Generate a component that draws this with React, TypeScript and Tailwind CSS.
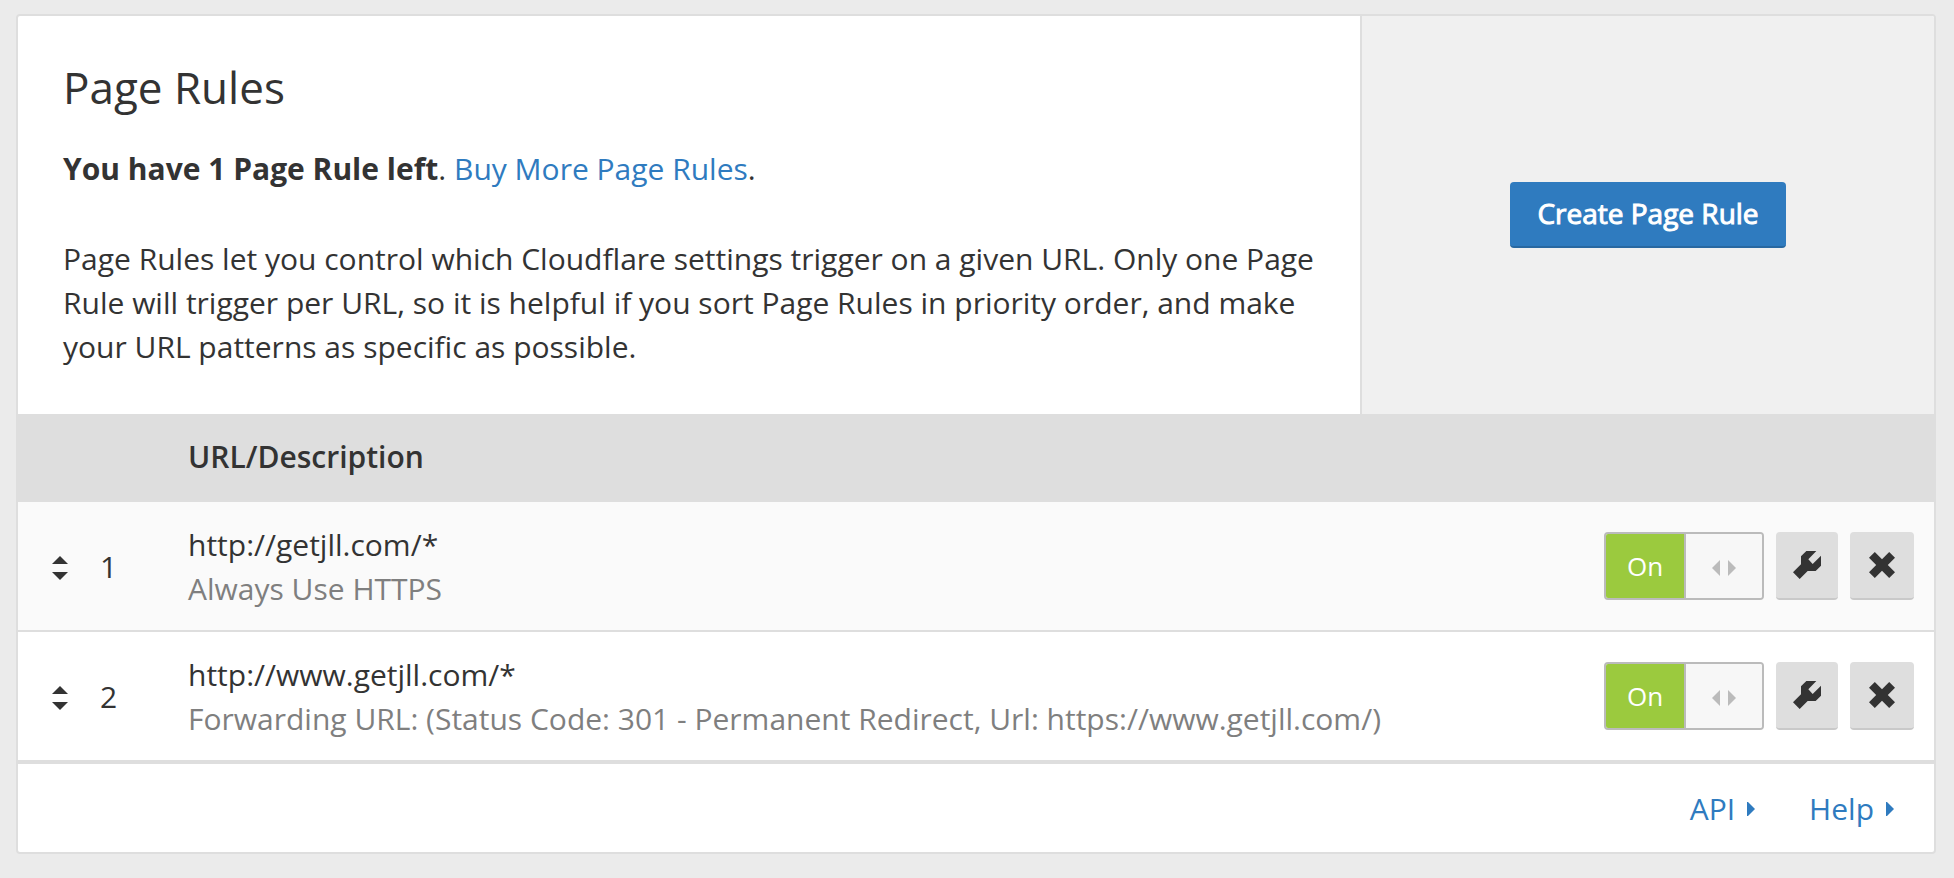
import { useState } from "react";

type Rule = { id: number; url: string; description: string };

const rules: Rule[] = [
  { id: 1, url: "http://getjll.com/*", description: "Always Use HTTPS" },
  {
    id: 2,
    url: "http://www.getjll.com/*",
    description:
      "Forwarding URL: (Status Code: 301 - Permanent Redirect, Url: https://www.getjll.com/)",
  },
];

function SortIcon() {
  return (
    <svg width="16" height="24" viewBox="0 0 16 24" fill="currentColor" aria-hidden="true">
      <path d="M8 0 16 8H0ZM0 16h16l-8 8Z" />
    </svg>
  );
}

function WrenchIcon() {
  return (
    <svg width="28" height="28" viewBox="0 0 84 84" fill="currentColor" aria-hidden="true">
      <path d="M20 84 0 64 24 40V16L40 0H70L46 25 59 39 84 14V44L68 60H44Z" />
    </svg>
  );
}

function CrossIcon() {
  return (
    <svg width="26" height="26" viewBox="0 0 76 76" fill="currentColor" aria-hidden="true">
      <path d="M17 0 38 21 59 0 76 17 55 38 76 59 59 76 38 55 17 76 0 59 21 38 0 17Z" />
    </svg>
  );
}

function Caret() {
  return (
    <svg width="8" height="14" viewBox="0 0 8 14" fill="currentColor" aria-hidden="true">
      <path d="M0 0h1l7 7-7 7H0Z" />
    </svg>
  );
}

function Toggle({ label }: { label: string }) {
  const [on, setOn] = useState(true);
  const handle = (
    <span className="flex flex-1 items-center justify-center bg-[#f7f7f7] pt-1 text-[#bbbbbb]">
      <svg width="24" height="16" viewBox="0 0 24 16" fill="currentColor" aria-hidden="true">
        <path d="M8 0v16L0 8ZM16 0l8 8-8 8Z" />
      </svg>
    </span>
  );
  return (
    <button
      type="button"
      role="switch"
      aria-checked={on}
      aria-label={label}
      onClick={() => setOn(!on)}
      className="flex h-[68px] w-40 cursor-pointer overflow-hidden rounded border-2 border-[#bbbbbb] text-[26px]"
    >
      {on ? (
        <>
          <span className="flex h-full w-20 items-center justify-center border-r-2 border-[#bbbbbb] bg-[#9bca3e] text-white">
            On
          </span>
          <span className="flex h-full flex-1">{handle}</span>
        </>
      ) : (
        <>
          <span className="flex h-full flex-1">{handle}</span>
          <span className="flex h-full w-20 items-center justify-center border-l-2 border-[#bbbbbb] bg-[#dedede]">
            Off
          </span>
        </>
      )}
    </button>
  );
}

function RuleRow({ rule, index }: { rule: Rule; index: number }) {
  return (
    <tr className="group odd:bg-[#fafafa]">
      <td className="w-[170px] border-b-2 border-[#dedede] pt-[2px] pl-[34px] group-last:border-b-4">
        <div className="flex items-center gap-8">
          <button type="button" aria-label={`Reorder rule ${index}`} className="cursor-move pt-[2px]">
            <SortIcon />
          </button>
          <span>{index}</span>
        </div>
      </td>
      <td className="border-b-2 border-[#dedede] pt-[21px] pb-[19px] group-last:border-b-4">
        <div>{rule.url}</div>
        <div className="text-[#7f7f7f]">{rule.description}</div>
      </td>
      <td className="border-b-2 border-[#dedede] pr-5 group-last:border-b-4">
        <div className="flex items-center justify-end gap-3">
          <Toggle label={`Rule ${index}`} />
          <button
            type="button"
            aria-label={`Edit rule ${index}`}
            className="flex h-[68px] w-[62px] cursor-pointer items-center justify-center rounded border-b-2 border-[#c9c9c9] bg-[#dedede]"
          >
            <WrenchIcon />
          </button>
          <button
            type="button"
            aria-label={`Delete rule ${index}`}
            className="flex h-[68px] w-16 cursor-pointer items-center justify-center rounded border-b-2 border-[#c9c9c9] bg-[#dedede]"
          >
            <CrossIcon />
          </button>
        </div>
      </td>
    </tr>
  );
}

export default function App() {
  return (
    <div className="min-h-screen bg-[#ebebeb] pt-[14px] pr-[18px] pb-6 pl-4 font-['Open_Sans',sans-serif] text-[30px] leading-[44px] text-[#333333]">
      <section className="overflow-hidden rounded border-2 border-[#dedede] bg-white">
        <div className="flex">
          <div className="flex-1 px-[45px] pt-[46px] pb-[45px]">
            <h1 className="mb-[35px] text-[44px] leading-[50px]">Page Rules</h1>
            <p className="mb-[46px]">
              <strong className="font-bold">You have 1 Page Rule left</strong>.{" "}
              <a href="#buy" className="text-[#2f7bbf]">
                Buy More Page Rules
              </a>
              .
            </p>
            <p>
              Page Rules let you control which Cloudflare settings trigger on a given URL. Only one
              Page Rule will trigger per URL, so it is helpful if you sort Page Rules in priority
              order, and make your URL patterns as specific as possible.
            </p>
          </div>
          <div className="flex w-[574px] flex-none items-center justify-center border-l-2 border-[#dedede] bg-[#f0f0f0]">
            <button
              type="button"
              className="h-[66px] cursor-pointer rounded border-b-2 border-[#2868a1] bg-[#2f7bbf] px-[27px] pb-[2px] text-[28px] text-white [-webkit-text-stroke:1px_white]"
            >
              Create Page Rule
            </button>
          </div>
        </div>

        <table className="w-full border-separate border-spacing-0 text-left">
          <thead>
            <tr className="h-[88px] bg-[#dedede]">
              <td />
              <th scope="col" className="pb-[2px] font-semibold">
                URL/Description
              </th>
              <td />
            </tr>
          </thead>
          <tbody>
            {rules.map((rule, i) => (
              <RuleRow key={rule.id} rule={rule} index={i + 1} />
            ))}
          </tbody>
        </table>

        <footer className="flex justify-end gap-[54px] pt-[23px] pr-10 pb-[21px] text-[#2f7bbf]">
          <a href="#api" className="flex items-center gap-3">
            API <Caret />
          </a>
          <a href="#help" className="flex items-center gap-3">
            Help <Caret />
          </a>
        </footer>
      </section>
    </div>
  );
}
